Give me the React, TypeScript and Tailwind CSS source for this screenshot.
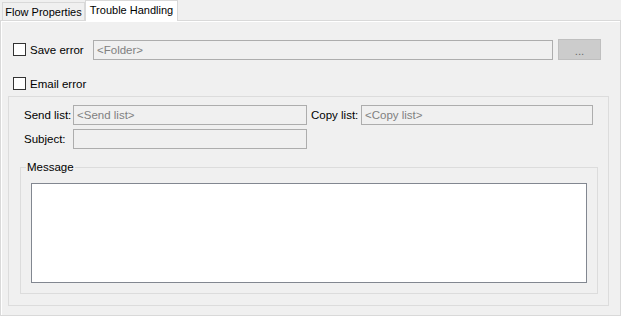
import React from 'react';

const font = { fontFamily: '"Liberation Sans", Arial, sans-serif' };

const CheckRow: React.FC<{ label: string }> = ({ label }) => (
  <label className="flex items-center gap-[4px] h-[21px] whitespace-nowrap">
    <span className="w-[13px] h-[13px] border border-[#333333] bg-white box-border" />
    <span>{label}</span>
  </label>
);

const Field: React.FC<{ width: string; placeholder?: string }> = ({ width, placeholder }) => (
  <div className={`${width} h-[20px] border border-[#adadad] bg-[#f0f0f0] flex items-center px-[3px] text-[#808080] box-border whitespace-nowrap`}>
    {placeholder}
  </div>
);

export default function App() {
  return (
    <div className="w-[621px] h-[316px] bg-[#f0f0f0] text-[11.5px] leading-[14px] text-black overflow-hidden" style={font}>
      {/* Tabs */}
      <div className="flex items-end h-[20px] pl-[2px] text-[11px]">
        <div className="w-[83px] h-[18px] border border-b-0 border-[#d9d9d9] bg-[#f0f0f0] flex items-center justify-center whitespace-nowrap">
          Flow Properties
        </div>
        <div className="relative z-10 w-[93px] h-[21px] -mb-px border border-b-0 border-[#d9d9d9] bg-white flex items-center justify-center pb-[2px] whitespace-nowrap">
          Trouble Handling
        </div>
      </div>

      {/* Page */}
      <div className="h-[296px] border border-[#d9d9d9]">
        <div className="h-full border-l border-t border-white pt-[17px] pl-[11px]">
          <div className="flex items-center">
            <div className="w-[80px]">
              <CheckRow label="Save error" />
            </div>
            <Field width="w-[460px]" placeholder="<Folder>" />
            <button className="ml-[5px] w-[43px] h-[21px] bg-[#cccccc] border border-[#bfbfbf] text-[#6d6d6d] leading-[10px] flex items-center justify-center pt-[3px]">
              ...
            </button>
          </div>

          <div className="mt-[13px]">
            <CheckRow label="Email error" />
          </div>

          {/* Email group */}
          <div className="mt-[2px] -ml-[5px] w-[601px] h-[210px] border border-[#dcdcdc] pt-[8px] pl-[15px]">
            <div className="flex items-center">
              <span className="w-[49px] whitespace-nowrap">Send list:</span>
              <Field width="w-[234px]" placeholder="<Send list>" />
              <span className="ml-[4px] w-[50px] whitespace-nowrap">Copy list:</span>
              <Field width="w-[232px]" placeholder="<Copy list>" />
            </div>
            <div className="flex items-center mt-[4px]">
              <span className="w-[49px] whitespace-nowrap">Subject:</span>
              <Field width="w-[234px]" />
            </div>

            {/* Message group */}
            <div className="relative mt-[18px] -ml-[4px] w-[578px] h-[127px] border border-[#dcdcdc] pt-[15px] pl-[10px]">
              <span className="absolute -top-[8px] left-[5px] bg-[#f0f0f0] px-[1px]">Message</span>
              <div className="w-[556px] h-[100px] border border-[#828790] bg-white" />
            </div>
          </div>
        </div>
      </div>
    </div>
  );
}
